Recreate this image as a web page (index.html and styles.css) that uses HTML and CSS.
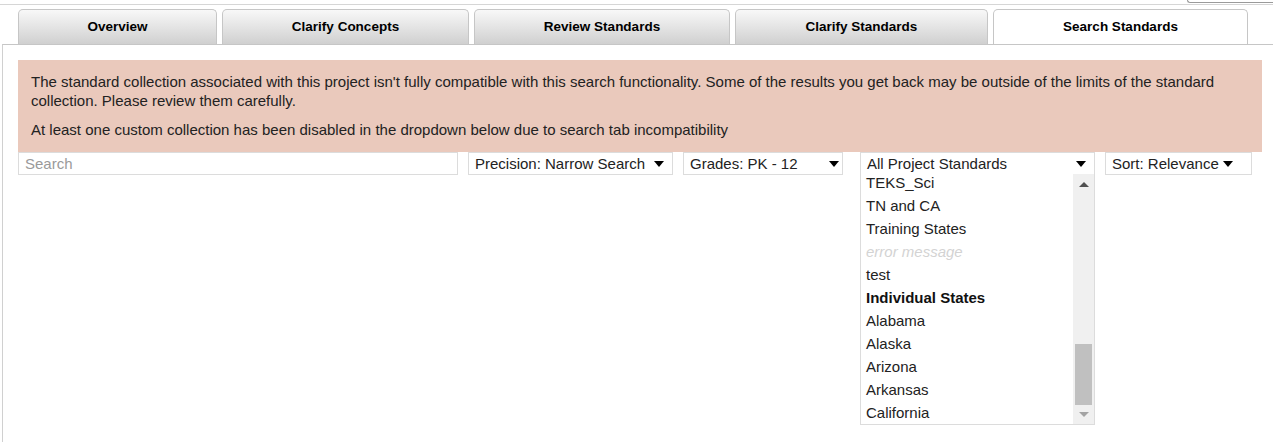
FILE: index.html
```html
<!DOCTYPE html>
<html>
<head>
<meta charset="utf-8">
<link rel="stylesheet" href="styles.css">
</head>
<body>
<div class="topbar"><div class="topbtn"></div></div>
<div class="tabs">
  <div class="tab t1">Overview</div>
  <div class="tab t2">Clarify Concepts</div>
  <div class="tab t3">Review Standards</div>
  <div class="tab t4">Clarify Standards</div>
  <div class="tab t5 active">Search Standards</div>
</div>
<div class="panel">
  <div class="warning">
    <p>The standard collection associated with this project isn't fully compatible with this search functionality. Some of the results you get back may be outside of the limits of the standard collection. Please review them carefully.</p>
    <p>At least one custom collection has been disabled in the dropdown below due to search tab incompatibility</p>
  </div>
  <div class="controls">
    <div class="search">Search</div>
    <div class="select precision"><span>Precision: Narrow Search</span><i class="caret"></i></div>
    <div class="select grades"><span>Grades: PK - 12</span><i class="caret"></i></div>
    <div class="select project"><span>All Project Standards</span><i class="caret"></i>
      <div class="dropdown">
        <div class="items">
          <div class="item">TEKS_Sci</div>
          <div class="item">TN and CA</div>
          <div class="item">Training States</div>
          <div class="item disabled">error message</div>
          <div class="item">test</div>
          <div class="item group">Individual States</div>
          <div class="item">Alabama</div>
          <div class="item">Alaska</div>
          <div class="item">Arizona</div>
          <div class="item">Arkansas</div>
          <div class="item">California</div>
        </div>
        <div class="scrollbar">
          <div class="arrow up"></div>
          <div class="track"><div class="thumb"></div></div>
          <div class="arrow down"></div>
        </div>
      </div>
    </div>
    <div class="select sort"><span>Sort: Relevance</span><i class="caret"></i></div>
  </div>
</div>
</body>
</html>
```
FILE: styles.css
```css
html, body {
  margin: 0;
  padding: 0;
  background: #fff;
  font-family: "Liberation Sans", Arial, sans-serif;
  font-size: 15px;
  color: #222;
  overflow: hidden;
}
.topbar {
  height: 4px;
  border-bottom: 1px solid #d6d6d6;
  display: flex;
  justify-content: flex-end;
}
.topbtn {
  width: 85px;
  height: 2px;
  border-left: 1px solid #9a9a9a;
  border-bottom: 1px solid #9a9a9a;
  border-bottom-left-radius: 3px;
  background: #fff;
  margin-bottom: 1px;
}
.tabs {
  display: flex;
  padding-left: 18px;
  margin-top: 4px;
  height: 35px;
}
.tab {
  box-sizing: border-box;
  height: 35px;
  margin-right: 5px;
  border: 1px solid #c6c6c6;
  border-bottom: none;
  border-radius: 5px 5px 0 0;
  background: linear-gradient(#f8f8f8, #d0d0d0);
  font-weight: bold;
  font-size: 13.5px;
  color: #000;
  display: flex;
  align-items: center;
  justify-content: center;
  padding-bottom: 1px;
}
.tab.active { background: #fff; }
.t1 { width: 199px; }
.t2 { width: 247px; }
.t3 { width: 256px; }
.t4 { width: 253px; }
.t5 { width: 255px; }
.panel {
  margin-left: 2px;
  border-left: 1px solid #d0d0d0;
  border-top: 1px solid #c6c6c6;
  padding: 15px 11px 0 15px;
  height: 400px;
}
.warning {
  background: #eac9bc;
  padding: 12px 13px 13px;
  color: #222;
  line-height: 19px;
}
.warning p { margin: 0 0 10px; }
.warning p:last-child { margin: 0; }
.controls {
  display: flex;
  align-items: flex-start;
}
.search, .select {
  box-sizing: border-box;
  height: 23px;
  border: 1px solid #dcdcdc;
  background: #fff;
  line-height: 22px;
  padding-left: 6px;
  color: #222;
}
.search {
  width: 440px;
  color: #9a9a9a;
  margin-right: 10px;
}
.select {
  display: flex;
  align-items: center;
  justify-content: space-between;
}
.caret {
  width: 0;
  height: 0;
  border-left: 5.5px solid transparent;
  border-right: 5.5px solid transparent;
  border-top: 6px solid #000;
}
.precision { width: 205px; margin-right: 10px; padding-right: 8px; }
.grades { width: 160px; margin-right: 17px; padding-right: 3px; }
.project { width: 235px; margin-right: 10px; padding-right: 8px; position: relative; }
.sort { width: 147px; padding-right: 18px; }
.dropdown {
  position: absolute;
  left: -1px;
  top: 21px;
  width: 235px;
  height: 251px;
  box-sizing: border-box;
  border: 1px solid #dcdcdc;
  border-top: none;
  background: #fff;
  display: flex;
  overflow: hidden;
}
.items {
  flex: 1;
  margin-top: -3px;
}
.item {
  height: 23px;
  line-height: 23px;
  padding-left: 5px;
  color: #222;
  white-space: nowrap;
}
.item.disabled { color: #d3d3d3; font-style: italic; }
.item.group { font-weight: bold; color: #111; }
.scrollbar {
  width: 21px;
  background: #f0f0f0;
  display: flex;
  flex-direction: column;
  align-items: center;
}
.arrow {
  height: 17px;
  width: 21px;
  display: flex;
  align-items: center;
  justify-content: center;
}
.arrow.up::before {
  content: "";
  border-left: 5px solid transparent;
  border-right: 5px solid transparent;
  border-bottom: 5px solid #505050;
  margin-top: 4px;
}
.arrow.down::before {
  content: "";
  border-left: 5px solid transparent;
  border-right: 5px solid transparent;
  border-top: 5px solid #a3a3a3;
  margin-bottom: 3px;
}
.track {
  flex: 1;
  width: 21px;
  display: flex;
  flex-direction: column;
  justify-content: flex-end;
  align-items: center;
}
.thumb {
  width: 17px;
  height: 61px;
  background: #c0c0c0;
  margin-bottom: 2px;
}
```
